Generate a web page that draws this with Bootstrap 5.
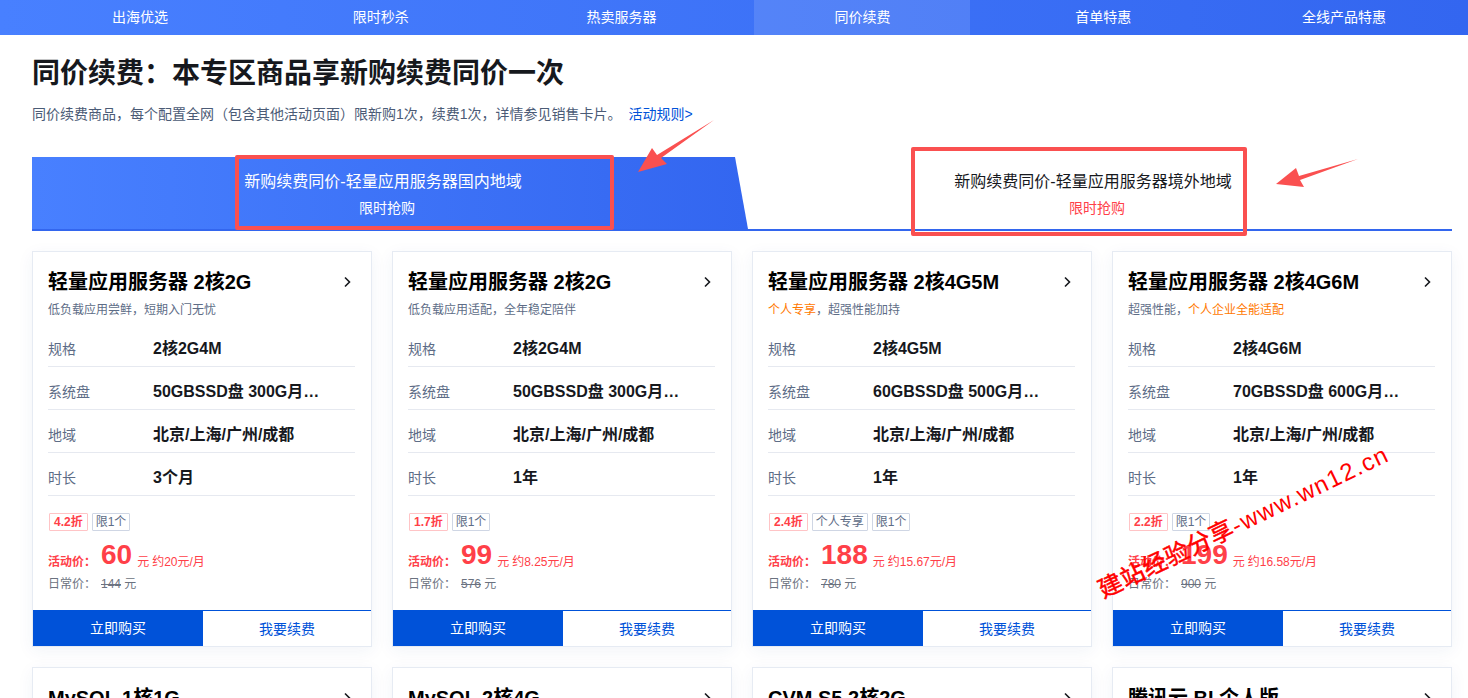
<!DOCTYPE html>
<html lang="zh-CN">
<head>
<meta charset="utf-8">
<title>同价续费</title>
<link href="https://cdn.jsdelivr.net/npm/bootstrap@5.3.0/dist/css/bootstrap.min.css" rel="stylesheet">
<style>
html,body{height:698px;overflow:hidden}
body{font-family:"Liberation Sans","Noto Sans CJK SC",sans-serif;color:#16181d;background:#fff;position:relative}
.topnav{height:35px;padding:0 16px 0 32px;background:linear-gradient(90deg,#4880ff,#3366f0)}
.topnav a{width:216px;line-height:35px;font-size:14px;color:#fff;text-align:center;text-decoration:none}
.topnav a.on{background:rgba(255,255,255,.12)}
.pagebody{padding:0 16px 0 32px}
.headline{font-size:28px;line-height:40px;font-weight:700;margin:19px 0 0;color:#16181d}
.intro{font-size:14px;line-height:20px;color:#4b5b76;margin:10px 0 0}
.intro a{color:#0052d9;text-decoration:none;margin-left:7px}
.tabrow{margin-top:33px;border-bottom:2px solid #3366ee;height:74px}
.tabitem{padding-right:6px;padding-top:13px;text-align:center}
.tabitem.lefttab{flex:0 0 716px;height:72px;color:#fff;background:linear-gradient(90deg,#4880ff,#3366f0);clip-path:polygon(0 0,703px 0,100% 100%,0 100%)}
.tabitem.righttab{flex:1 1 0;color:#16181d}
.tabname{font-size:16px;line-height:24px;padding-right:8px}
.tabsub{font-size:14px;line-height:20px;margin-top:4px}
.righttab .tabsub{color:#ff4048}
.cardgrid{display:grid;grid-template-columns:repeat(4,340px);gap:20px;margin-top:20px}
.offer{height:396px;border:1px solid #e6ebf3;box-shadow:0 4px 16px rgba(40,70,130,.06);background:#fff}
.offerbody{padding:14px 16px 0 15px}
.offername{height:32px}
.offername h3{font-size:20px;line-height:32px;font-weight:700;margin:0;color:#000}
.offersub{font-size:12px;line-height:18px;color:#5d6c86;margin-top:3px;margin-bottom:5px}
.orange{color:#ff7800}
.spec{height:43px;padding-top:8px;border-bottom:1px solid #e6e9f0}
.spec dt{width:105px;font-size:14px;font-weight:400;color:#5d6c86;margin:0;flex:none}
.spec dd{font-size:16px;font-weight:700;color:#16181d;margin:0;white-space:nowrap}
.tagline{margin-top:17px;height:18px;gap:4px;margin-left:1px}
.chip{font-size:12px;line-height:16px;height:18px;padding:0 3px;border:1px solid #cfd6e4;color:#5d6c86;border-radius:1px}
.chip.hot{border-color:#ffc4c6;color:#ff4048;font-weight:700;padding:0 4px}
.priceline{height:34px;margin-top:7px;color:#ff4048;font-size:12px}
.priceline b{width:53px}
.priceline b,.priceline span{margin-bottom:1px}
.priceline strong{font-size:28px;line-height:34px;margin-right:5px}
.priceline .mon{margin-left:3px}
.oldline{font-size:12px;line-height:18px;color:#6b7280;margin-top:3px}
.oldline span:first-child{display:inline-block;width:53px}
.btnpair{height:36px;border-top:1px solid #0052d9;margin-top:17px}
.btnpair a{font-size:14px;line-height:34px;text-align:center;text-decoration:none}
.buynow{flex:0 0 170px;background:#0052d9;color:#fff}
.renew{flex:1 1 0;background:#fff;color:#0052d9;padding-top:1px}
.redbox{position:absolute;border:4px solid #fa5050;border-radius:2px;pointer-events:none}
.box1{left:235px;top:155px;width:379px;height:75px}
.box2{left:911px;top:147px;width:336px;height:89px}
.annot{position:absolute;left:0;top:0;pointer-events:none}
.stamp{position:absolute;left:1084px;top:506px;font-size:24px;line-height:32px;color:#f00;white-space:nowrap;transform:rotate(-25.7deg);letter-spacing:1.4px}
.stamp span{letter-spacing:.6px;-webkit-text-stroke:.5px #f00}
</style>
</head>
<body>
<nav class="topnav d-flex justify-content-between">
  <a href="#">出海优选</a><a href="#">限时秒杀</a><a href="#">热卖服务器</a><a href="#" class="on">同价续费</a><a href="#">首单特惠</a><a href="#">全线产品特惠</a>
</nav>
<main class="pagebody">
  <h1 class="headline">同价续费&#xFF1A;本专区商品享新购续费同价一次</h1>
  <p class="intro">同价续费商品&#xFF0C;每个配置全网&#xFF08;包含其他活动页面&#xFF09;限新购1次&#xFF0C;续费1次&#xFF0C;详情参见销售卡片。<a href="#">活动规则&gt;</a></p>
  <div class="tabrow d-flex">
    <div class="tabitem lefttab"><div class="tabname">新购续费同价-轻量应用服务器国内地域</div><div class="tabsub">限时抢购</div></div>
    <div class="tabitem righttab"><div class="tabname">新购续费同价-轻量应用服务器境外地域</div><div class="tabsub">限时抢购</div></div>
  </div>
  <section class="cardgrid">
    <article class="offer d-flex flex-column">
      <div class="offerbody">
        <div class="offername d-flex justify-content-between align-items-center"><h3>轻量应用服务器 2核2G</h3><svg width="16" height="16" viewBox="0 0 16 16" fill="none" stroke="#16181d" stroke-width="1.6"><path d="M6 3.5 10.5 8 6 12.5"/></svg></div>
        <div class="offersub">低负载应用尝鲜&#xFF0C;短期入门无忧</div>
        <dl class="m-0">
          <div class="spec d-flex align-items-center"><dt>规格</dt><dd>2核2G4M</dd></div>
          <div class="spec d-flex align-items-center"><dt>系统盘</dt><dd>50GBSSD盘 300G月…</dd></div>
          <div class="spec d-flex align-items-center"><dt>地域</dt><dd>北京/上海/广州/成都</dd></div>
          <div class="spec d-flex align-items-center"><dt>时长</dt><dd>3个月</dd></div>
        </dl>
        <div class="tagline d-flex"><span class="chip hot">4.2折</span><span class="chip">限1个</span></div>
        <div class="priceline d-flex align-items-end"><b>活动价&#xFF1A;</b><strong>60</strong><span>元</span><span class="mon">约20元/月</span></div>
        <div class="oldline"><span>日常价&#xFF1A;</span><s>144</s> 元</div>
      </div>
      <div class="btnpair d-flex"><a href="#" class="buynow">立即购买</a><a href="#" class="renew">我要续费</a></div>
    </article>
    <article class="offer d-flex flex-column">
      <div class="offerbody">
        <div class="offername d-flex justify-content-between align-items-center"><h3>轻量应用服务器 2核2G</h3><svg width="16" height="16" viewBox="0 0 16 16" fill="none" stroke="#16181d" stroke-width="1.6"><path d="M6 3.5 10.5 8 6 12.5"/></svg></div>
        <div class="offersub">低负载应用适配&#xFF0C;全年稳定陪伴</div>
        <dl class="m-0">
          <div class="spec d-flex align-items-center"><dt>规格</dt><dd>2核2G4M</dd></div>
          <div class="spec d-flex align-items-center"><dt>系统盘</dt><dd>50GBSSD盘 300G月…</dd></div>
          <div class="spec d-flex align-items-center"><dt>地域</dt><dd>北京/上海/广州/成都</dd></div>
          <div class="spec d-flex align-items-center"><dt>时长</dt><dd>1年</dd></div>
        </dl>
        <div class="tagline d-flex"><span class="chip hot">1.7折</span><span class="chip">限1个</span></div>
        <div class="priceline d-flex align-items-end"><b>活动价&#xFF1A;</b><strong>99</strong><span>元</span><span class="mon">约8.25元/月</span></div>
        <div class="oldline"><span>日常价&#xFF1A;</span><s>576</s> 元</div>
      </div>
      <div class="btnpair d-flex"><a href="#" class="buynow">立即购买</a><a href="#" class="renew">我要续费</a></div>
    </article>
    <article class="offer d-flex flex-column">
      <div class="offerbody">
        <div class="offername d-flex justify-content-between align-items-center"><h3>轻量应用服务器 2核4G5M</h3><svg width="16" height="16" viewBox="0 0 16 16" fill="none" stroke="#16181d" stroke-width="1.6"><path d="M6 3.5 10.5 8 6 12.5"/></svg></div>
        <div class="offersub"><span class="orange">个人专享</span>&#xFF0C;超强性能加持</div>
        <dl class="m-0">
          <div class="spec d-flex align-items-center"><dt>规格</dt><dd>2核4G5M</dd></div>
          <div class="spec d-flex align-items-center"><dt>系统盘</dt><dd>60GBSSD盘 500G月…</dd></div>
          <div class="spec d-flex align-items-center"><dt>地域</dt><dd>北京/上海/广州/成都</dd></div>
          <div class="spec d-flex align-items-center"><dt>时长</dt><dd>1年</dd></div>
        </dl>
        <div class="tagline d-flex"><span class="chip hot">2.4折</span><span class="chip">个人专享</span><span class="chip">限1个</span></div>
        <div class="priceline d-flex align-items-end"><b>活动价&#xFF1A;</b><strong>188</strong><span>元</span><span class="mon">约15.67元/月</span></div>
        <div class="oldline"><span>日常价&#xFF1A;</span><s>780</s> 元</div>
      </div>
      <div class="btnpair d-flex"><a href="#" class="buynow">立即购买</a><a href="#" class="renew">我要续费</a></div>
    </article>
    <article class="offer d-flex flex-column">
      <div class="offerbody">
        <div class="offername d-flex justify-content-between align-items-center"><h3>轻量应用服务器 2核4G6M</h3><svg width="16" height="16" viewBox="0 0 16 16" fill="none" stroke="#16181d" stroke-width="1.6"><path d="M6 3.5 10.5 8 6 12.5"/></svg></div>
        <div class="offersub">超强性能&#xFF0C;<span class="orange">个人企业全能适配</span></div>
        <dl class="m-0">
          <div class="spec d-flex align-items-center"><dt>规格</dt><dd>2核4G6M</dd></div>
          <div class="spec d-flex align-items-center"><dt>系统盘</dt><dd>70GBSSD盘 600G月…</dd></div>
          <div class="spec d-flex align-items-center"><dt>地域</dt><dd>北京/上海/广州/成都</dd></div>
          <div class="spec d-flex align-items-center"><dt>时长</dt><dd>1年</dd></div>
        </dl>
        <div class="tagline d-flex"><span class="chip hot">2.2折</span><span class="chip">限1个</span></div>
        <div class="priceline d-flex align-items-end"><b>活动价&#xFF1A;</b><strong>199</strong><span>元</span><span class="mon">约16.58元/月</span></div>
        <div class="oldline"><span>日常价&#xFF1A;</span><s>900</s> 元</div>
      </div>
      <div class="btnpair d-flex"><a href="#" class="buynow">立即购买</a><a href="#" class="renew">我要续费</a></div>
    </article>
    <article class="offer"><div class="offerbody"><div class="offername d-flex justify-content-between align-items-center"><h3>MySQL 1核1G</h3><svg width="16" height="16" viewBox="0 0 16 16" fill="none" stroke="#16181d" stroke-width="1.6"><path d="M6 3.5 10.5 8 6 12.5"/></svg></div></div></article>
    <article class="offer"><div class="offerbody"><div class="offername d-flex justify-content-between align-items-center"><h3>MySQL 2核4G</h3><svg width="16" height="16" viewBox="0 0 16 16" fill="none" stroke="#16181d" stroke-width="1.6"><path d="M6 3.5 10.5 8 6 12.5"/></svg></div></div></article>
    <article class="offer"><div class="offerbody"><div class="offername d-flex justify-content-between align-items-center"><h3>CVM S5 2核2G</h3><svg width="16" height="16" viewBox="0 0 16 16" fill="none" stroke="#16181d" stroke-width="1.6"><path d="M6 3.5 10.5 8 6 12.5"/></svg></div></div></article>
    <article class="offer"><div class="offerbody"><div class="offername d-flex justify-content-between align-items-center"><h3>腾讯云 BI 个人版</h3><svg width="16" height="16" viewBox="0 0 16 16" fill="none" stroke="#16181d" stroke-width="1.6"><path d="M6 3.5 10.5 8 6 12.5"/></svg></div></div></article>
  </section>
</main>
<div class="redbox box1"></div>
<div class="redbox box2"></div>
<svg class="annot" width="1468" height="698" viewBox="0 0 1468 698"><polygon fill="#fa5050" points="714,120 657,155 652,148 638,172 667,164 661,158"/><polygon fill="#fa5050" points="1358,159 1299,176 1296,168 1276,184 1304,187 1300,180"/></svg>
<div class="stamp"><span>建站经验分享</span>-www.wn12.cn</div>
<script src="https://cdn.jsdelivr.net/npm/bootstrap@5.3.0/dist/js/bootstrap.bundle.min.js"></script>
</body>
</html>
